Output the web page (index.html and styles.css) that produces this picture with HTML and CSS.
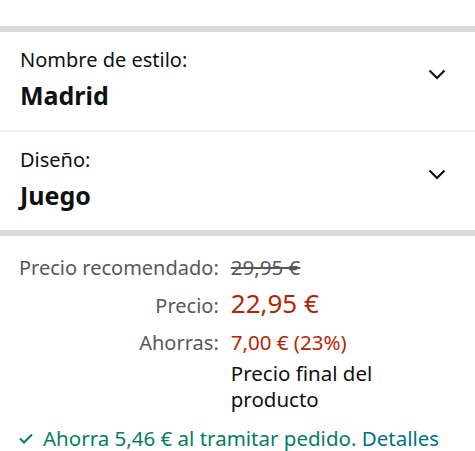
FILE: index.html
```html
<!DOCTYPE html>
<html lang="es">
<head>
  <meta charset="UTF-8">
  <title>Producto</title>
  <link rel="stylesheet" href="styles.css">
</head>
<body>
  <div class="top-space"></div>
  <div class="divider-thick"></div>

  <div class="variation">
    <div class="variation-text">
      <div class="variation-label">Nombre de estilo:</div>
      <div class="variation-value">Madrid</div>
    </div>
    <svg class="chevron" width="18" height="11" viewBox="0 0 18 11"><path d="M1.5 1.5 L9 9 L16.5 1.5" fill="none" stroke="#0f1111" stroke-width="2.2"/></svg>
  </div>
  <div class="divider-thin"></div>
  <div class="variation">
    <div class="variation-text">
      <div class="variation-label">Diseño:</div>
      <div class="variation-value">Juego</div>
    </div>
    <svg class="chevron" width="18" height="11" viewBox="0 0 18 11"><path d="M1.5 1.5 L9 9 L16.5 1.5" fill="none" stroke="#0f1111" stroke-width="2.2"/></svg>
  </div>
  <div class="divider-thick"></div>

  <div class="prices">
    <div class="price-label row1">Precio recomendado:</div>
    <div class="price-value row1 old">29,95 €</div>
    <div class="price-label row2">Precio:</div>
    <div class="price-value row2 big">22,95 €</div>
    <div class="price-label row3">Ahorras:</div>
    <div class="price-value row3 red">7,00 € (23%)</div>
    <div></div>
    <div class="price-value note">Precio final del producto</div>
  </div>

  <div class="coupon">
    <svg class="check" width="14" height="11" viewBox="0 0 14 11"><path d="M1 5.5 L5 9.5 L13 1.5" fill="none" stroke="#067d62" stroke-width="2"/></svg>
    <span class="coupon-text">Ahorra 5,46 € al tramitar pedido. <a href="#" class="link">Detalles</a></span>
  </div>
</body>
</html>
```

FILE: styles.css
```css
body {
  margin: 0;
  font-family: "Noto Sans", Roboto, sans-serif;
  color: #0f1111;
  background: #fff;
}

.top-space {
  height: 26px;
}

.divider-thick {
  height: 6px;
  background: #d5dbdb;
}

.divider-thin {
  height: 2px;
  background: #eeeeee;
}

/* bloques de variaciones */
.variation {
  display: flex;
  align-items: flex-start;
  justify-content: space-between;
  padding: 15px 29px 0 20px;
  height: 98px;
  box-sizing: border-box;
}

.variation-label {
  font-size: 20px;
  line-height: 26px;
}

.variation-value {
  font-size: 25px;
  font-weight: bold;
  line-height: 30px;
  margin-top: 7px;
}

.chevron {
  margin-top: 22px;
}

/* precios */
.prices {
  display: grid;
  grid-template-columns: max-content 1fr;
  column-gap: 12px;
  align-items: baseline;
  padding: 17px 20px 0 19px;
}

.price-label {
  text-align: right;
  font-size: 20px;
  color: #565959;
  line-height: 28px;
  white-space: nowrap;
}

.price-value {
  font-size: 20.5px;
  line-height: 28px;
}

.row3 {
  margin-top: 4px;
}

.old {
  color: #565959;
  text-decoration: line-through;
}

.big {
  font-size: 26px;
  color: #b12704;
  line-height: 42px;
}

.red {
  color: #b12704;
}

.note {
  width: 160px;
  line-height: 26px;
  margin-top: 3px;
}

.coupon {
  display: flex;
  align-items: center;
  gap: 10px;
  padding: 12px 20px 0 19px;
}

.coupon-text {
  font-size: 20.5px;
  line-height: 28px;
  color: #067d62;
  white-space: nowrap;
}

.link {
  color: #007185;
  text-decoration: none;
}
```
